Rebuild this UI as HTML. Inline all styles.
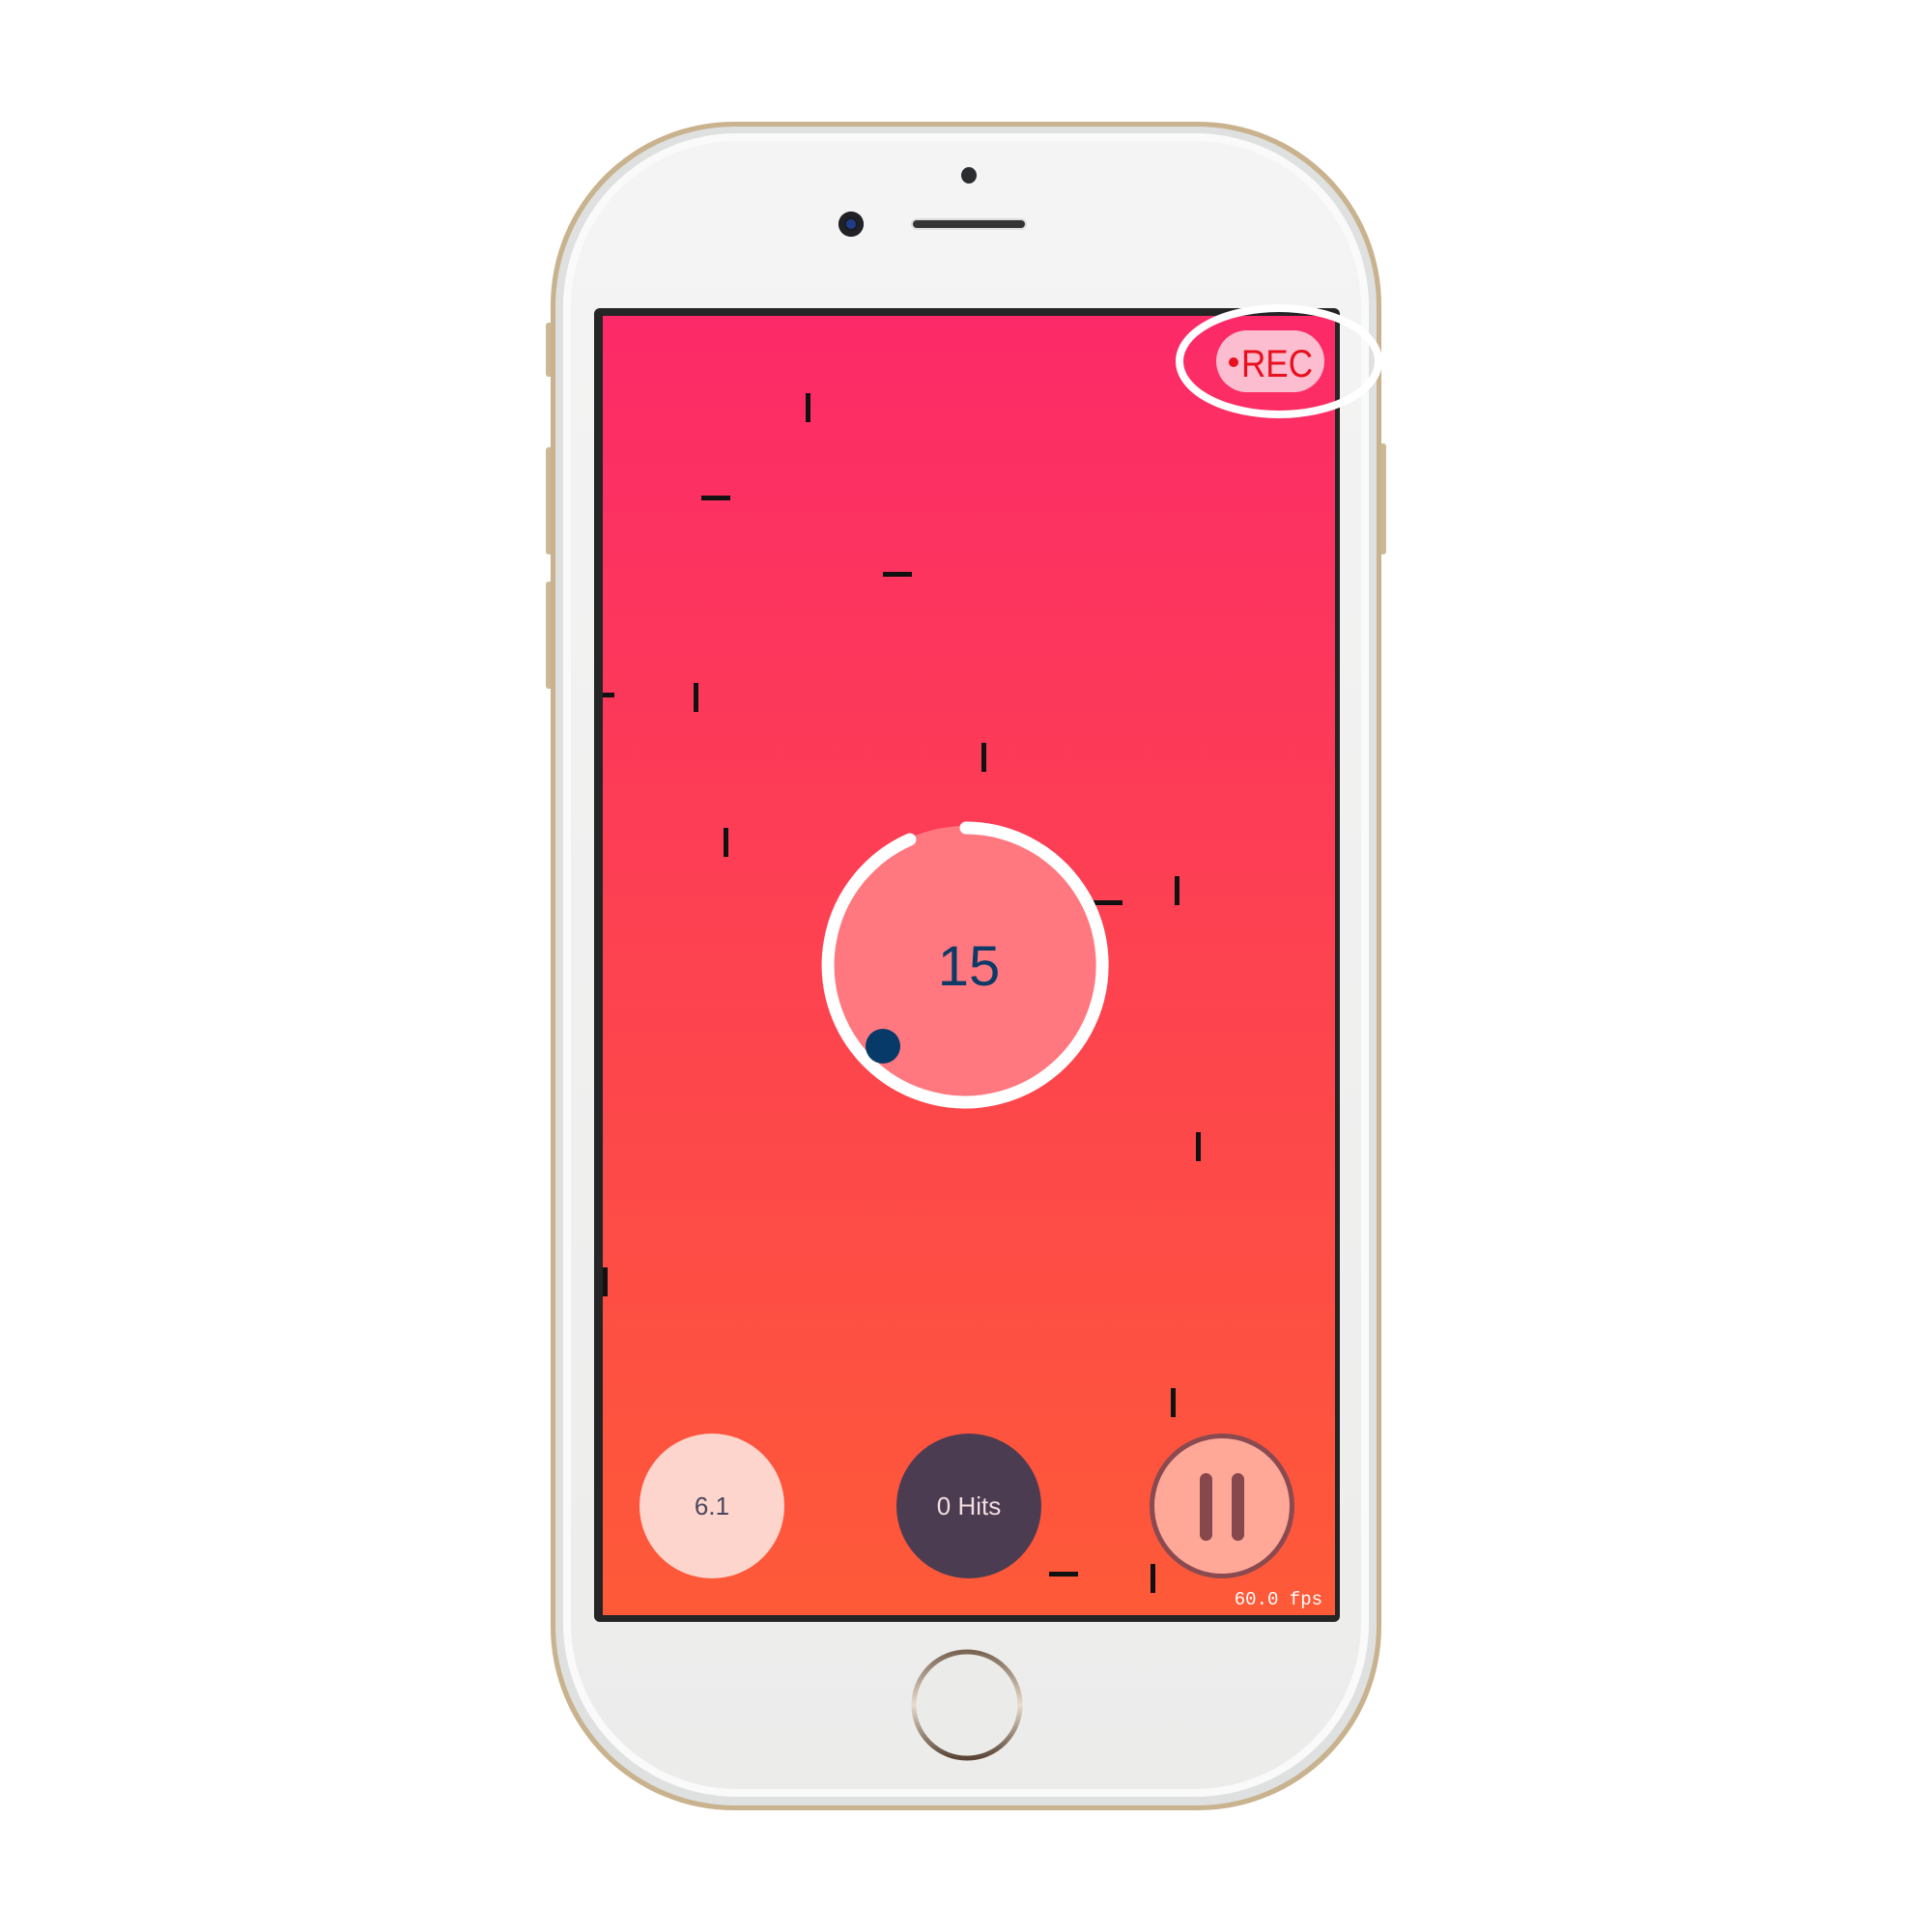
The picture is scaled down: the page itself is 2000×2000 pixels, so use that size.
<!DOCTYPE html>
<html><head><style>
html,body{margin:0;padding:0;background:#fff;width:2000px;height:2000px;overflow:hidden;position:relative;font-family:"Liberation Sans",sans-serif}
.abs{position:absolute}
.deb{position:absolute;background:#111}
</style></head><body>
<div class="abs" style="left:565px;top:334px;width:8px;height:56px;background:#cdb896;border-radius:3px"></div>
<div class="abs" style="left:565px;top:463px;width:8px;height:111px;background:#cdb896;border-radius:3px"></div>
<div class="abs" style="left:565px;top:602px;width:8px;height:111px;background:#cdb896;border-radius:3px"></div>
<div class="abs" style="left:1427px;top:459px;width:8px;height:115px;background:#cdb896;border-radius:3px"></div>
<div class="abs" style="left:570px;top:126px;width:860px;height:1748px;border-radius:190px;background:#c9b28e;"></div>
<div class="abs" style="left:575px;top:131px;width:850px;height:1738px;border-radius:186px;background:#dfe0e0;"></div>
<div class="abs" style="left:583px;top:138px;width:834px;height:1722px;border-radius:180px;background:linear-gradient(#f4f4f4,#ececeb);box-shadow:inset 0 0 0 8px #fafafa"></div>
<div class="abs" style="left:995px;top:173px;width:16px;height:17px;border-radius:50%;background:#2b2d30"></div>
<div class="abs" style="left:868px;top:219px;width:26px;height:26px;border-radius:50%;background:#1a1c22;box-shadow:inset 0 0 0 6px #202228"><div style="position:absolute;left:8px;top:8px;width:10px;height:10px;border-radius:50%;background:#1c3e8a"></div></div>
<div class="abs" style="left:945px;top:228px;width:116px;height:8px;border-radius:4px;background:#333;box-shadow:0 0 0 2px #ddd"></div>
<div class="abs" style="left:615px;top:319px;width:772px;height:1360px;background:#252525;border-radius:6px"></div>
<div class="abs" style="left:624px;top:327px;width:758px;height:1345px;background:linear-gradient(#fc2a68,#fe5a38);overflow:hidden">
  <div class="deb" style="left:210px;top:80px;width:5px;height:30px"></div>
  <div class="deb" style="left:102px;top:186px;width:30px;height:5px"></div>
  <div class="deb" style="left:290px;top:265px;width:30px;height:5px"></div>
  <div class="deb" style="left:0px;top:390px;width:12px;height:5px"></div>
  <div class="deb" style="left:94px;top:380px;width:5px;height:30px"></div>
  <div class="deb" style="left:392px;top:442px;width:5px;height:30px"></div>
  <div class="deb" style="left:125px;top:530px;width:5px;height:30px"></div>
  <div class="deb" style="left:508px;top:605px;width:30px;height:5px"></div>
  <div class="deb" style="left:592px;top:580px;width:5px;height:30px"></div>
  <div class="deb" style="left:614px;top:845px;width:5px;height:30px"></div>
  <div class="deb" style="left:0px;top:985px;width:5px;height:30px"></div>
  <div class="deb" style="left:588px;top:1110px;width:5px;height:30px"></div>
  <div class="deb" style="left:462px;top:1300px;width:30px;height:5px"></div>
  <div class="deb" style="left:567px;top:1292px;width:5px;height:30px"></div>
  <div class="abs" style="left:38px;top:1157px;width:150px;height:150px;border-radius:50%;background:#fed5cc;color:#4a4660;font-size:26px;line-height:150px;text-align:center">6.1</div>
  <div class="abs" style="left:304px;top:1157px;width:150px;height:150px;border-radius:50%;background:#4b3c51;color:#f3dde0;font-size:26px;line-height:150px;text-align:center">0 Hits</div>
  <div class="abs" style="left:566px;top:1157px;width:140px;height:140px;border-radius:50%;background:#ffa898;border:5px solid #8a4a50">
    <div class="abs" style="left:47px;top:36px;width:13px;height:70px;border-radius:7px;background:#86474d"></div>
    <div class="abs" style="left:80px;top:36px;width:13px;height:70px;border-radius:7px;background:#86474d"></div>
  </div>
  <div class="abs" style="right:13px;top:1318px;color:#fff;font-family:'Liberation Mono',monospace;font-size:19px">60.0 fps</div>
</div>
<svg class="abs" style="left:0;top:0" width="2000" height="2000">
  <circle cx="1000" cy="999" r="144" fill="#ff7880"/>
  <path d="M1000 857 A142 142 0 1 1 942 869" fill="none" stroke="#fff" stroke-width="13" stroke-linecap="round"/>
  <circle cx="914" cy="1083" r="18" fill="#073a68"/>
  <text x="1003" y="1020" text-anchor="middle" font-family="Liberation Sans, sans-serif" font-size="58" fill="#0d3a66">15</text>
  <rect x="1259" y="342" width="112" height="64" rx="32" fill="#fcbdd0"/>
  <circle cx="1277" cy="375" r="5" fill="#e8101e"/>
  <text x="1285" y="390" font-family="Liberation Sans, sans-serif" font-size="40" fill="#e8101e" textLength="74" lengthAdjust="spacingAndGlyphs">REC</text>
  <ellipse cx="1324" cy="374" rx="103" ry="55" fill="none" stroke="#fff" stroke-width="8"/>
  <defs><linearGradient id="g" x1="0" y1="0" x2="0" y2="1"><stop offset="0" stop-color="#7a6555"/><stop offset="0.5" stop-color="#e8dccd"/><stop offset="1" stop-color="#5a4536"/></linearGradient></defs>
  <circle cx="1001" cy="1765" r="55" fill="#ebecea" stroke="url(#g)" stroke-width="5"/>
</svg>
</body></html>
